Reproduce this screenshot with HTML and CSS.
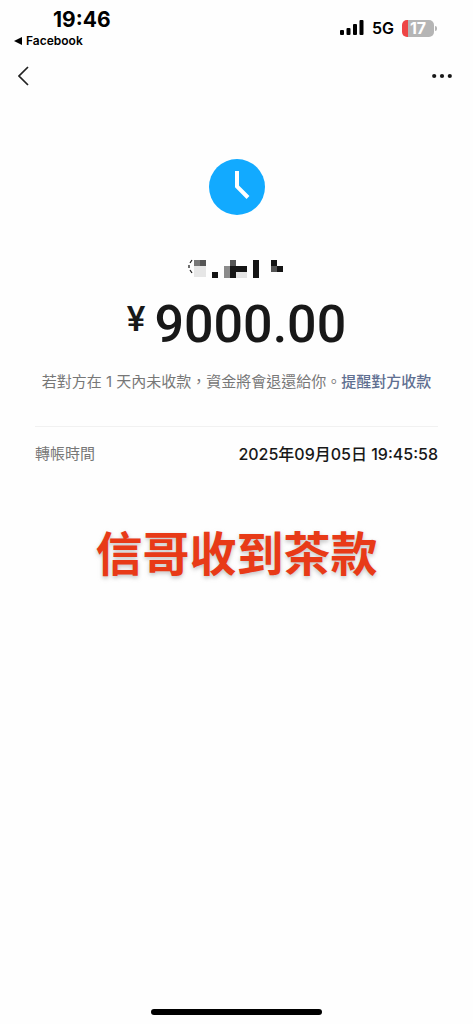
FILE: index.html
```html
<!DOCTYPE html>
<html lang="zh-Hant">
<head>
<meta charset="utf-8">
<meta name="viewport" content="width=device-width, initial-scale=1">
<title>轉帳</title>
<link rel="stylesheet" href="styles.css">
</head>
<body>
<div class="screen">
  <header class="status">
    <div class="status-left">
      <time class="clock">19:46</time>
      <a class="back-app" href="#"><svg width="8" height="8" viewBox="0 0 8 8" aria-hidden="true"><path d="M0 4 8 0v8z"/></svg>Facebook</a>
    </div>
    <div class="status-right">
      <svg width="25" height="16" viewBox="0 0 25 16" aria-hidden="true"><rect x="1" y="10" width="4" height="5" rx="1"/><rect x="7.500" y="8" width="4" height="7" rx="1"/><rect x="14" y="4" width="4" height="11" rx="1"/><rect x="20.500" y="0" width="4" height="15" rx="1"/></svg>
      <span class="network">5G</span>
      <span class="battery"><span class="battery-body">17</span><span class="battery-tip"></span></span>
    </div>
  </header>
  <nav class="nav">
    <button class="nav-button" type="button" aria-label="返回"><svg width="11" height="20" viewBox="0 0 11 20"><path d="M10 1 1 10l9 9" fill="none" stroke="#222" stroke-width="1.7"/></svg></button>
    <button class="nav-button" type="button" aria-label="更多"><svg width="20" height="6" viewBox="0 0 20 6" fill="#181818"><circle cx="2.2" cy="3" r="2.1"/><circle cx="10" cy="3" r="2.1"/><circle cx="17.8" cy="3" r="2.1"/></svg></button>
  </nav>
  <main class="content">
    <svg class="state-icon" width="56" height="56" viewBox="0 0 56 56" aria-hidden="true"><circle cx="28" cy="28" r="28" fill="#12aaff"/><path d="M28 12v15.500l11 11" fill="none" stroke="#fff" stroke-width="4"/></svg>
    <svg class="masked-name" width="98" height="20" viewBox="0 0 98 20" shape-rendering="crispEdges" aria-hidden="true">
      <path d="M4 1 2 4M1 6v3M2 11l2 3" fill="none" stroke="#222" stroke-width="1.300" shape-rendering="auto"/>
      <path fill="#777" d="M6 1h6v6H6z"/><path fill="#555" d="M12 1h6v6h-6z"/><path fill="#e6e6e6" d="M6 7h12v11H6z"/>
      <path fill="#151515" d="M24 13h6v6h-6z"/>
      <path fill="#8b8b8b" d="M36 7h6v12h-6z"/><path fill="#555" d="M42 1h6v6h-6z"/><path fill="#151515" d="M42 7h17v6H48v6h-6z"/><path fill="#e3e3e3" d="M48 13h11v6H48z"/>
      <path fill="#151515" d="M65 1h6v18h-6zM83 1h6v6h6v6H83z"/><path fill="#555" d="M83 7h6v6h-6z"/>
    </svg>
    <h1 class="amount"><span class="currency">¥</span><span>9000.00</span></h1>
    <p class="hint">若對方在 1 天內未收款，資金將會退還給你。<a class="remind" href="#">提醒對方收款</a></p>
    <dl class="detail"><dt>轉帳時間</dt><dd>2025年09月05日 19:45:58</dd></dl>
    <p class="caption">信哥收到茶款</p>
  </main>
  <div class="home-bar"></div>
</div>
</body>
</html>
```

FILE: styles.css
```css
* { box-sizing: border-box; }
body {
  margin: 0;
  background: #fefefe;
  color: #181818;
  font-family: Inter, "Noto Sans CJK TC", sans-serif;
}
.screen {
  display: flex;
  flex-direction: column;
  min-height: 100vh;
}
.status {
  display: flex;
  justify-content: space-between;
  padding: 8px 36px 0 14px;
  color: #000;
}
.status-left {
  display: flex;
  flex-direction: column;
}
.clock {
  padding-left: 39px;
  font-size: 21px;
  line-height: 24px;
  font-weight: 700;
}
.back-app {
  display: flex;
  align-items: center;
  gap: 4px;
  color: #000;
  font-size: 12px;
  line-height: 18px;
  font-weight: 600;
  text-decoration: none;
}
.status-right {
  display: flex;
  align-items: center;
  gap: 8px;
  height: 40px;
}
.network {
  font-size: 16px;
  font-weight: 600;
}
.battery {
  display: flex;
  align-items: center;
  gap: 1px;
}
.battery-body {
  width: 32px;
  border-radius: 5px;
  background: linear-gradient(to right, #ee4545 6px, #b5b5b5 6px);
  color: #fff;
  font-size: 16px;
  line-height: 17px;
  font-weight: 700;
  text-align: center;
}
.battery-tip {
  width: 2px;
  height: 5px;
  border-radius: 0 2px 2px 0;
  background: #b5b5b5;
}
.nav {
  display: flex;
  justify-content: space-between;
  padding: 0 21px 0 18px;
}
.nav-button {
  display: flex;
  align-items: center;
  height: 52px;
  padding: 0;
  border: 0;
  background: none;
}
.content {
  display: flex;
  flex: 1;
  flex-direction: column;
  align-items: center;
  padding: 57px 35px 0;
}
.masked-name { margin-top: 44px; }
.amount {
  display: flex;
  align-items: flex-start;
  gap: 9px;
  margin: 14px 0 0;
  font-family: Roboto, sans-serif;
  font-size: 52px;
  line-height: 64px;
  font-weight: 500;
}
.currency {
  font-size: 35px;
  line-height: 54px;
}
.hint {
  margin: 13px 0 0;
  color: #777;
  font-size: 15px;
  line-height: 24px;
  white-space: nowrap;
}
.remind {
  color: #5f6f91;
  font-weight: 500;
  text-decoration: none;
}
.detail {
  display: flex;
  justify-content: space-between;
  align-self: stretch;
  margin: 32px 0 0;
  padding-top: 15px;
  border-top: 1px solid #f1f1f1;
  font-size: 15px;
  line-height: 24px;
}
.detail dt { color: #777; }
.detail dd {
  margin: 0;
  font-size: 16px;
  font-weight: 500;
}
.caption {
  margin: 49px 0 0;
  color: #e83a17;
  font-family: "Noto Sans CJK SC", sans-serif;
  font-size: 47px;
  line-height: 72px;
  font-weight: 700;
  text-shadow: 0 2px 4px #9999;
}
.home-bar {
  align-self: center;
  width: 36%;
  height: 6px;
  margin-bottom: 9px;
  border-radius: 3px;
  background: #000;
}
```
